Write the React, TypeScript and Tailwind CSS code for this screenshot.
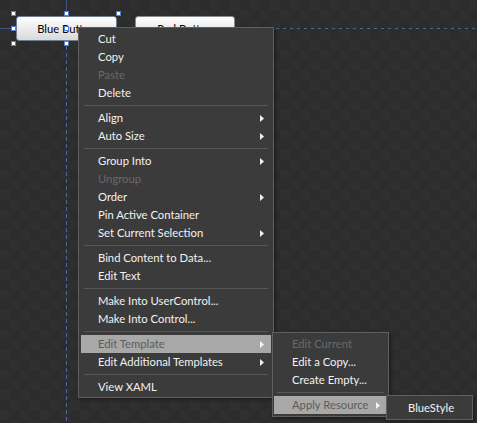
type Item = { label?: string; disabled?: boolean; sub?: boolean; active?: boolean; sep?: boolean };

const mainItems: Item[] = [
  { label: 'Cut' },
  { label: 'Copy' },
  { label: 'Paste', disabled: true },
  { label: 'Delete' },
  { sep: true },
  { label: 'Align', sub: true },
  { label: 'Auto Size', sub: true },
  { sep: true },
  { label: 'Group Into', sub: true },
  { label: 'Ungroup', disabled: true },
  { label: 'Order', sub: true },
  { label: 'Pin Active Container' },
  { label: 'Set Current Selection', sub: true },
  { sep: true },
  { label: 'Bind Content to Data...' },
  { label: 'Edit Text' },
  { sep: true },
  { label: 'Make Into UserControl...' },
  { label: 'Make Into Control...' },
  { sep: true },
  { label: 'Edit Template', sub: true, active: true },
  { label: 'Edit Additional Templates', sub: true },
  { sep: true },
  { label: 'View XAML' },
];

const templateItems: Item[] = [
  { label: 'Edit Current', disabled: true },
  { label: 'Edit a Copy...' },
  { label: 'Create Empty...' },
  { sep: true },
  { label: 'Apply Resource', sub: true, active: true },
];

// selection handles around Blue Button
const handles = [
  [13, 13], [66, 13], [118, 13],
  [13, 28], [66, 28],
  [13, 43], [66, 43],
];

function Arrow({ dark }: { dark?: boolean }) {
  return (
    <svg width="4" height="7" viewBox="0 0 4 7" className="shrink-0">
      <path d="M0 0 L4 3.5 L0 7 Z" fill={dark ? '#f4f4f4' : '#f0f0f0'} />
    </svg>
  );
}

function MenuRows({ items, textPad }: { items: Item[]; textPad: string }) {
  return (
    <>
      {items.map((it, i) =>
        it.sep ? (
          <div key={i} className="mx-[3px] my-[3px] h-px bg-[#575757]" />
        ) : (
          <div
            key={i}
            className={`flex h-[18px] items-center justify-between pr-[7px] ${textPad} ${
              it.active ? 'bg-[#a8a8a8] text-[#5c5c5c]' : it.disabled ? 'text-[#696969]' : 'text-[#f2f2f2]'
            }`}
          >
            <span className="whitespace-nowrap">{it.label}</span>
            {it.sub && <Arrow dark={it.active} />}
          </div>
        )
      )}
    </>
  );
}

export default function App() {
  return (
    <div
      className="relative h-[423px] w-[477px] overflow-hidden bg-[#2e2e2e] bg-[repeating-conic-gradient(#2f2f2f_0_25%,#2c2c2c_0_50%)] bg-[length:20px_20px] text-[11.25px] leading-none"
      style={{ fontFamily: 'Lato, "Open Sans", sans-serif' }}
    >
      {/* design surface buttons */}
      <div className="absolute left-[16px] top-[16px] flex gap-[18px]">
        <div className="flex h-[25px] w-[101px] items-center justify-center rounded-[3px] border border-[#6f7d90] bg-gradient-to-b from-[#ffffff] to-[#d9d9d9] text-black">
          Blue Button
        </div>
        <div className="flex h-[25px] w-[100px] items-center justify-center rounded-[3px] border border-[#8a8a8a] bg-gradient-to-b from-[#ffffff] to-[#d9d9d9] text-black">
          Red Button
        </div>
      </div>

      {/* guide lines and selection adorners */}
      <svg className="absolute left-0 top-0" width="477" height="423">
        <line x1="66.5" y1="0" x2="66.5" y2="11" stroke="#3c5486" strokeWidth="1" />
        <line x1="66.5" y1="46" x2="66.5" y2="423" stroke="#4a689e" strokeWidth="1" strokeDasharray="4 3" />
        <line x1="0" y1="28.5" x2="11" y2="28.5" stroke="#3c5486" strokeWidth="1" />
        <line x1="276" y1="28.5" x2="477" y2="28.5" stroke="#4a689e" strokeWidth="1" strokeDasharray="3 4" />
        {handles.map(([x, y], i) => (
          <rect key={i} x={x - 1.5} y={y - 1.5} width="4" height="4" fill="#fff" stroke="#4c7fd6" strokeWidth="1" />
        ))}
      </svg>

      {/* main context menu */}
      <div className="absolute left-[78px] top-[27px] w-[196px] border border-[#5f5f5f] bg-[#3b3b3b] px-[2px] pb-[1px] pt-[2px] shadow-[2px_2px_3px_rgba(0,0,0,0.35)]">
        <MenuRows items={mainItems} textPad="pl-[17px]" />
      </div>

      {/* Edit Template submenu */}
      <div className="absolute left-[272px] top-[332px] w-[117px] border border-[#5f5f5f] bg-[#3b3b3b] px-[1px] py-[2px] shadow-[2px_2px_3px_rgba(0,0,0,0.35)]">
        <MenuRows items={templateItems} textPad="pl-[18px]" />
      </div>

      {/* Apply Resource submenu */}
      <div className="absolute left-[386px] top-[395px] flex h-[25px] w-[87px] items-center border border-[#5f5f5f] bg-[#3b3b3b] pl-[21px] text-[#f2f2f2] shadow-[2px_2px_3px_rgba(0,0,0,0.35)]">
        BlueStyle
      </div>
    </div>
  );
}
